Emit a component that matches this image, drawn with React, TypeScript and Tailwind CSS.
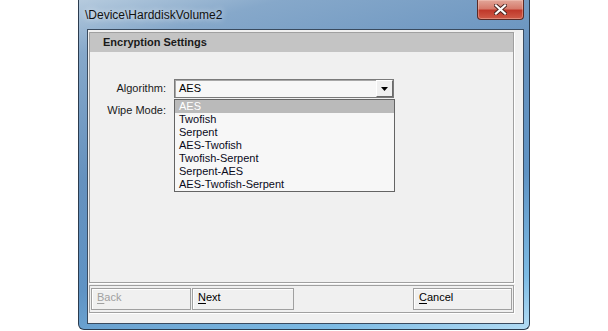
import React from 'react';

const algorithms = ['AES', 'Twofish', 'Serpent', 'AES-Twofish', 'Twofish-Serpent', 'Serpent-AES', 'AES-Twofish-Serpent'];

const CloseGlyph = () => (
    <svg width="13" height="11" viewBox="0 0 13 11">
        <path d="M2 1.5 L11 9.5 M11 1.5 L2 9.5" stroke="#4a2420" strokeWidth="4" strokeLinecap="square" />
        <path d="M2 1.5 L11 9.5 M11 1.5 L2 9.5" stroke="#ffffff" strokeWidth="2.2" strokeLinecap="square" />
    </svg>
);

const WizardButton: React.FC<{ label: string; hotkey: string; disabled?: boolean; className?: string }> = ({ label, hotkey, disabled, className }) => (
    <button
        disabled={disabled}
        className={`h-[22px] border border-[#a0a0a0] bg-[#f0f0f0] shadow-[inset_1px_1px_0_#ffffff] pl-[5px] pb-[3px] text-left text-[11px] ${
            disabled ? 'text-[#a0a0a0]' : 'text-black'
        } ${className ?? ''}`}
    >
        <span className="underline underline-offset-2">{hotkey}</span>
        {label.slice(1)}
    </button>
);

export default function App() {
    return (
        <div className="w-[608px] h-[331px] bg-white overflow-hidden font-['Liberation_Sans',Arial,sans-serif]">
            {/* Window frame */}
            <div className="relative ml-[78px] w-[452px] h-[330px] flex flex-col rounded-b-[6px] border border-t-0 border-[#2b3b4e] bg-[linear-gradient(165deg,#b6cbde_0%,#86a8ca_12%,#6591be_40%,#5f93c4_65%,#7dbbe4_88%,#b3dcf4_100%)]">
                <div className="h-[29px] flex items-center pl-[6px] text-[12px] text-[#111] [text-shadow:0_0_6px_rgba(255,255,255,0.9)]">
                    \Device\HarddiskVolume2
                </div>

                {/* Close button */}
                <div className="absolute top-0 right-[5px] w-[47px] h-[20px] flex items-center justify-center rounded-b-[4px] border border-t-0 border-[#5a2a26] bg-[linear-gradient(180deg,#e2a699_0%,#d67b6c_45%,#c0392b_55%,#cf5b48_100%)] shadow-[inset_0_0_0_1px_rgba(255,220,210,0.35)]">
                    <CloseGlyph />
                </div>

                {/* Client area */}
                <div className="ml-[8px] w-[437px] h-[295px] border border-[#3a4b5f] bg-[#f0f0f0] flex flex-col">
                    {/* Settings panel */}
                    <div className="ml-[1px] mt-[2px] w-[425px] h-[251px] border border-[#a0a0a0] shadow-[1px_1px_0_#ffffff] flex flex-col">
                        <div className="h-[19px] bg-[#c4c4c4] flex items-center pl-[13px] text-[11px] font-bold text-[#1a1a1a]">
                            Encryption Settings
                        </div>

                        <div className="mt-[27px] flex items-center">
                            <span className="w-[76px] text-right text-[11px] text-[#1a1a1a]">Algorithm:</span>
                            <div className="relative ml-[8px] w-[220px] h-[19px] border border-[#7a7a7a] bg-[#f7f7f7] shadow-[inset_1px_1px_0_#a8a8a8] flex items-center">
                                <span className="pl-[4px] text-[11px] text-black">AES</span>
                                <div className="ml-auto w-[17px] h-[17px] flex items-center justify-center bg-[#f0f0f0] border border-l-white border-t-white border-r-[#6a6a6a] border-b-[#6a6a6a]">
                                    <svg width="7" height="4" viewBox="0 0 7 4">
                                        <path d="M0 0 H7 L3.5 4 Z" fill="#000" />
                                    </svg>
                                </div>

                                {/* Open dropdown list */}
                                <div className="absolute top-[19px] left-[-1px] z-10 w-[221px] h-[93px] border border-[#646464] bg-[#f7f7f7] flex flex-col">
                                    {algorithms.map((name, i) => (
                                        <div
                                            key={name}
                                            className={`h-[13px] leading-[13px] pl-[4px] text-[11px] ${
                                                i === 0 ? 'bg-[#bababa] text-white' : 'text-[#0a0a1a]'
                                            }`}
                                        >
                                            {name}
                                        </div>
                                    ))}
                                </div>
                            </div>
                        </div>

                        <div className="mt-[3px] h-[19px] flex items-center">
                            <span className="w-[76px] text-right text-[11px] text-[#1a1a1a]">Wipe Mode:</span>
                        </div>
                    </div>

                    {/* Button bar */}
                    <div className="ml-[1px] mt-[2px] w-[425px] h-[28px] border border-[#a0a0a0] shadow-[1px_1px_0_#ffffff] flex pt-[2px] pl-[1px] pr-[1px]">
                        <WizardButton label="Back" hotkey="B" disabled className="w-[100px]" />
                        <WizardButton label="Next" hotkey="N" className="ml-[1px] w-[102px]" />
                        <WizardButton label="Cancel" hotkey="C" className="ml-auto w-[99px]" />
                    </div>
                </div>
            </div>
        </div>
    );
}
